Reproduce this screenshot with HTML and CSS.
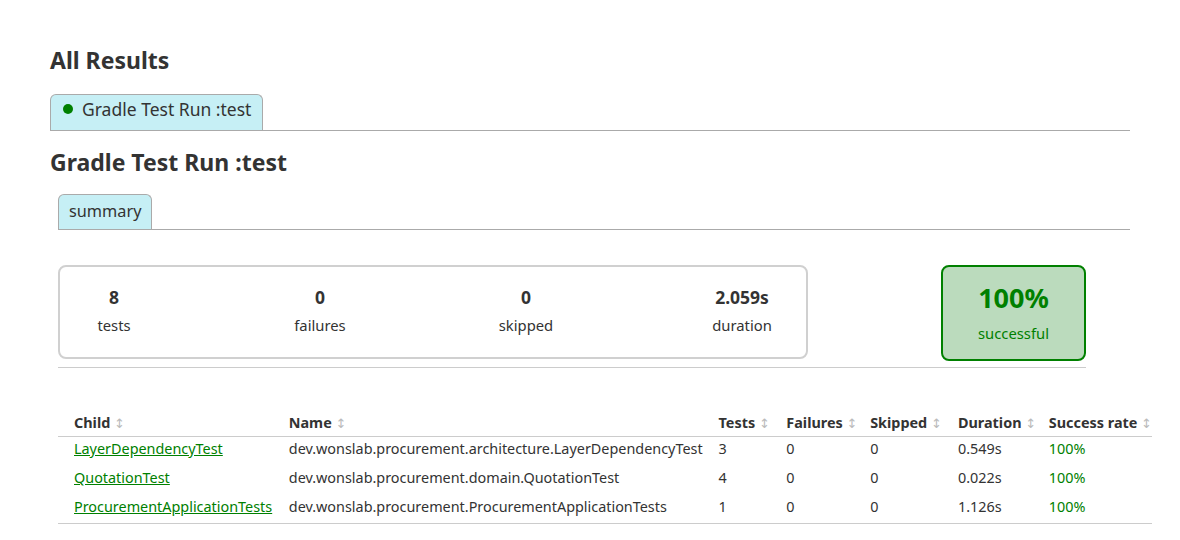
FILE: index.html
```html
<!DOCTYPE html>
<html>
<head>
<meta charset="utf-8">
<link rel="stylesheet" href="styles.css">
</head>
<body>
<div class="page">
  <h1 class="title">All Results</h1>
  <div class="tabbar outer">
    <div class="tab"><span class="dot"></span>Gradle Test Run :test</div>
  </div>
  <div class="run">
    <h2 class="subtitle">Gradle Test Run :test</h2>
    <div class="inner">
      <div class="tabbar">
        <div class="tab">summary</div>
      </div>
      <div class="summary">
        <div class="counters">
          <div class="counter"><div class="value">8</div><div class="label">tests</div></div>
          <div class="counter"><div class="value">0</div><div class="label">failures</div></div>
          <div class="counter"><div class="value">0</div><div class="label">skipped</div></div>
          <div class="counter wide"><div class="value">2.059s</div><div class="label">duration</div></div>
        </div>
        <div class="rate">
          <div class="rate-value">100%</div>
          <div class="rate-label">successful</div>
        </div>
      </div>
      <table class="results">
        <thead>
          <tr>
            <th class="c-child">Child <span class="sort">↕</span></th>
            <th class="c-name">Name <span class="sort">↕</span></th>
            <th class="c-tests">Tests <span class="sort">↕</span></th>
            <th class="c-fail">Failures <span class="sort">↕</span></th>
            <th class="c-skip">Skipped <span class="sort">↕</span></th>
            <th class="c-dur">Duration <span class="sort">↕</span></th>
            <th class="c-rate">Success rate <span class="sort">↕</span></th>
          </tr>
        </thead>
        <tbody>
          <tr>
            <td><a href="#">LayerDependencyTest</a></td>
            <td>dev.wonslab.procurement.architecture.LayerDependencyTest</td>
            <td>3</td><td>0</td><td>0</td><td>0.549s</td><td class="ok">100%</td>
          </tr>
          <tr>
            <td><a href="#">QuotationTest</a></td>
            <td>dev.wonslab.procurement.domain.QuotationTest</td>
            <td>4</td><td>0</td><td>0</td><td>0.022s</td><td class="ok">100%</td>
          </tr>
          <tr>
            <td><a href="#">ProcurementApplicationTests</a></td>
            <td>dev.wonslab.procurement.ProcurementApplicationTests</td>
            <td>1</td><td>0</td><td>0</td><td>1.126s</td><td class="ok">100%</td>
          </tr>
        </tbody>
      </table>
    </div>
  </div>
</div>
</body>
</html>
```

FILE: styles.css
```css
* { box-sizing: border-box; }
html, body { margin: 0; padding: 0; background: #fff; }
body {
  font-family: "Noto Sans", "Open Sans", sans-serif;
  color: #333;
  font-size: 14.4px;
}
.page {
  padding: 44px 50px 0 50px;
  width: 1180px;
}
.title {
  margin: 0;
  font-size: 23px;
  font-weight: bold;
  line-height: 32px;
  color: #333;
}
.tabbar {
  border-bottom: 1px solid #aaa;
  display: flex;
  width: 1080px;
}
.outer { margin-top: 18px; }
.tab {
  background: #c6eff5;
  border: 1px solid #aaa;
  border-bottom: none;
  border-radius: 6px 6px 0 0;
  font-size: 17px;
  height: 36px;
  padding: 0 10px 3px 10px;
  display: flex;
  align-items: center;
  color: #333;
}
.outer .tab { padding: 0 11px 8px 12px; font-size: 17.5px; }
.dot {
  width: 10px;
  height: 10px;
  border-radius: 50%;
  background: #008000;
  margin-right: 9px;
}
.subtitle {
  margin: 14px 0 0 0;
  font-size: 23px;
  line-height: 34px;
  font-weight: bold;
  color: #333;
}
.inner {
  padding-left: 8px;
}
.inner .tabbar {
  margin-top: 15px;
  width: 1072px;
}
.inner .tab {
  height: 35px;
  font-size: 16.3px;
  padding: 0 10px 2px 10px;
}
.summary {
  display: flex;
  align-items: flex-start;
  margin-top: 35px;
  width: 1028px;
  border-bottom: 1px solid #ccc;
  padding-bottom: 6px;
  gap: 133px;
}
.counters {
  width: 750px;
  height: 94px;
  border: 2px solid #d0d0d0;
  border-radius: 8px;
  display: flex;
  gap: 98px;
  padding-top: 18px;
}
.counter {
  width: 108px;
  text-align: center;
}
.counter.wide { width: 128px; }
.value {
  font-size: 17.5px;
  font-weight: bold;
  line-height: 24px;
}
.label {
  font-size: 14.8px;
  line-height: 22px;
  margin-top: 5px;
}
.rate {
  width: 145px;
  height: 96px;
  background: #bbdbbd;
  border: 2px solid #008000;
  border-radius: 8px;
  text-align: center;
  color: #008000;
  padding-top: 13px;
}
.rate-value {
  font-size: 27px;
  font-weight: bold;
  line-height: 36px;
}
.rate-label {
  font-size: 14.8px;
  line-height: 22px;
  margin-top: 6px;
}
.results {
  margin-top: 43px;
  border-collapse: collapse;
  width: 1094px;
}
.results th {
  text-align: left;
  font-weight: bold;
  font-size: 14.4px;
  line-height: 20px;
  padding: 2px 0 2px 0;
  border-bottom: 1px solid #ccc;
  white-space: nowrap;
}
.results td {
  font-size: 14.4px;
  line-height: 20px;
  padding: 2px 0 7px 0;
  white-space: nowrap;
}
.results th:first-child, .results td:first-child { padding-left: 16px; }
.results tbody tr:last-child td { border-bottom: 1px solid #ccc; padding-bottom: 6px; }
.c-child { width: 231px; }
.c-name { width: 430px; }
.c-tests { width: 68px; }
.c-fail { width: 84px; }
.c-skip { width: 88px; }
.c-dur { width: 91px; }
.sort { color: #bbb; font-weight: normal; font-size: 13px; font-family: "DejaVu Sans", sans-serif; }
a { color: #008000; text-decoration: underline; }
.ok { color: #008000; }
```
